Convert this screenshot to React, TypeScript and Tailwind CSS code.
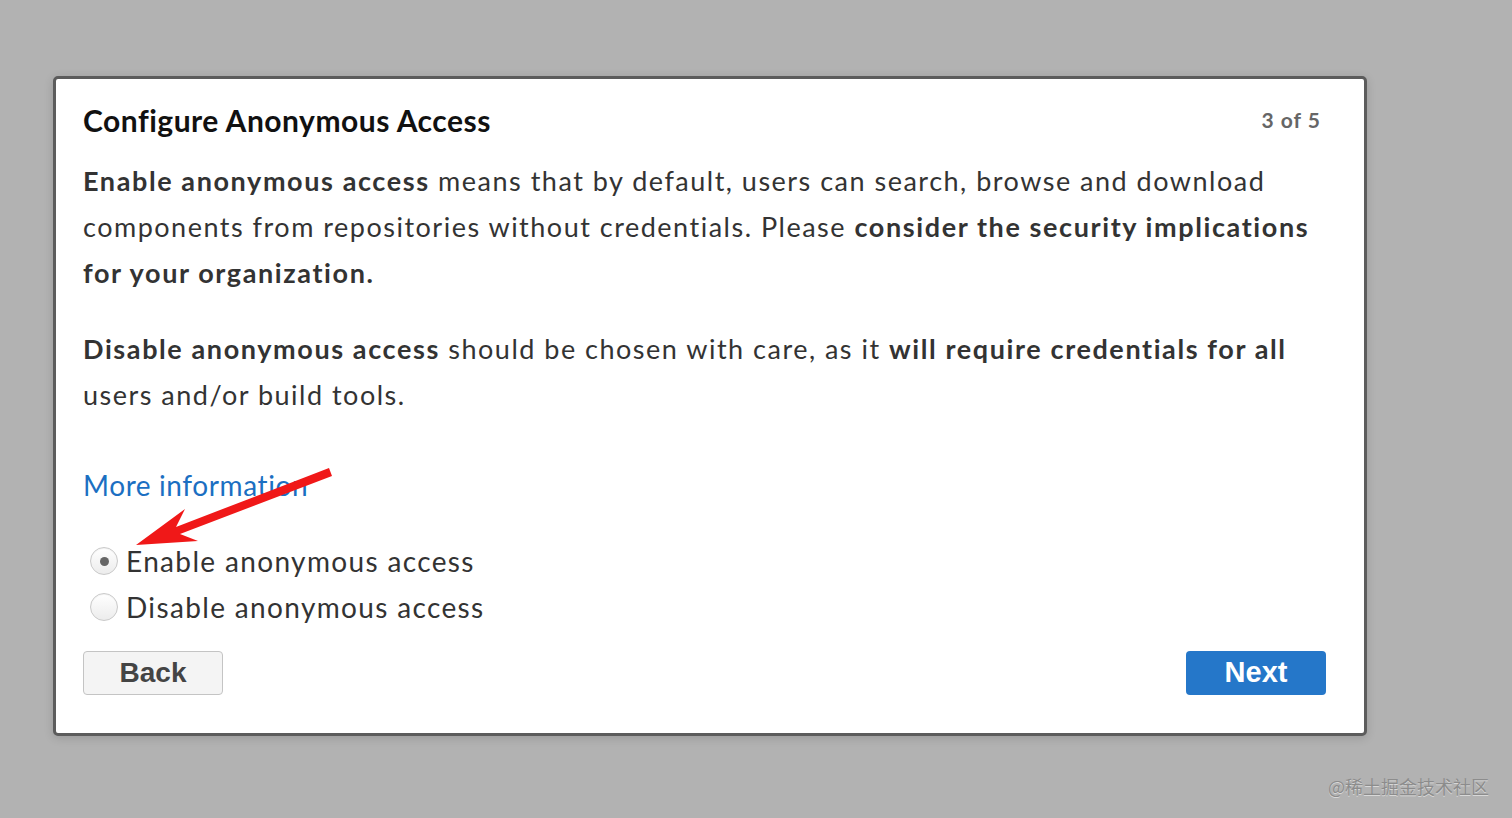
import React from "react";

const font = { fontFamily: "Lato, 'Open Sans', sans-serif" };

function Radio({ checked, label }: { checked?: boolean; label: string }) {
  return (
    <label className="flex items-center h-[46px] gap-[8px] pl-[7px]">
      <span className="w-[28px] h-[28px] rounded-full border border-[#c9c9c9] bg-gradient-to-b from-white to-[#ececec] flex items-center justify-center shadow-[inset_0_1px_1px_rgba(0,0,0,0.05)]">
        {checked && <span className="w-[9px] h-[9px] rounded-full bg-[#666]" />}
      </span>
      <span className="text-[28px] text-[#333] leading-[46px] tracking-[1.35px] whitespace-nowrap">
        {label}
      </span>
    </label>
  );
}

function B({ children }: { children: React.ReactNode }) {
  return <b className="font-bold tracking-[1.6px]">{children}</b>;
}

export default function App() {
  return (
    <div
      className="relative w-[1512px] h-[818px] bg-[#b2b2b2] pt-[76px] pl-[53px] overflow-hidden"
      style={font}
    >
      <div className="w-[1314px] h-[660px] bg-white border-[3px] border-[#5c5c5c] rounded-[5px] shadow-[0_2px_10px_rgba(0,0,0,0.15)] pt-[23px] pl-[27px] pr-[38px] flex flex-col">
        <div className="flex items-center justify-between h-[36px]">
          <h1 className="text-[30px] font-bold text-[#111] leading-[36px] tracking-[0.5px] whitespace-nowrap">
            Configure Anonymous Access
          </h1>
          <span className="text-[21px] font-bold text-[#666] mr-[5px] tracking-[1px]">3 of 5</span>
        </div>
        <p className="mt-[20px] text-[27px] leading-[46px] text-[#333] tracking-[1.5px] whitespace-nowrap">
          <B>Enable anonymous access</B> means that by default, users can search, browse and download
          <br />
          components from repositories without credentials. Please{" "}
          <B>consider the security implications</B>
          <br />
          <B>for your organization.</B>
        </p>
        <p className="mt-[30px] text-[27px] leading-[46px] text-[#333] tracking-[1.5px] whitespace-nowrap">
          <B>Disable anonymous access</B> should be chosen with care, as it{" "}
          <B>will require credentials for all</B>
          <br />
          users and/or build tools.
        </p>
        <div className="mt-[44px] h-[46px] leading-[46px]">
          <a className="text-[28px] text-[#1b6fc2] tracking-[0.6px]">More information</a>
        </div>
        <div className="mt-[30px] flex flex-col">
          <Radio checked label="Enable anonymous access" />
          <Radio label="Disable anonymous access" />
        </div>
        <div className="mt-[21px] flex justify-between">
          <button
            className="w-[140px] h-[44px] rounded-[4px] border border-[#c4c4c4] bg-[#f4f4f4] text-[28px] font-bold text-[#444]"
            style={{ fontFamily: "'Liberation Sans', Arial, sans-serif" }}
          >
            Back
          </button>
          <button
            className="w-[140px] h-[44px] rounded-[4px] bg-[#2577c9] text-[29px] font-bold text-white"
            style={{ fontFamily: "'Liberation Sans', Arial, sans-serif" }}
          >
            Next
          </button>
        </div>
      </div>

      <svg
        className="absolute left-0 top-0 pointer-events-none"
        width="1512"
        height="818"
        viewBox="0 0 1512 818"
      >
        <polygon
          points="136,545 185,509 176,527 329,468 332,476 180,534 198,541"
          fill="#f01818"
        />
      </svg>

      <span
        className="absolute left-[1328px] top-[773px] text-[18px] text-[#8c8c8c] [text-shadow:0_1px_0_rgba(255,255,255,0.5)]"
        style={{ fontFamily: "'Noto Sans CJK SC', sans-serif" }}
      >
        @稀土掘金技术社区
      </span>
    </div>
  );
}
